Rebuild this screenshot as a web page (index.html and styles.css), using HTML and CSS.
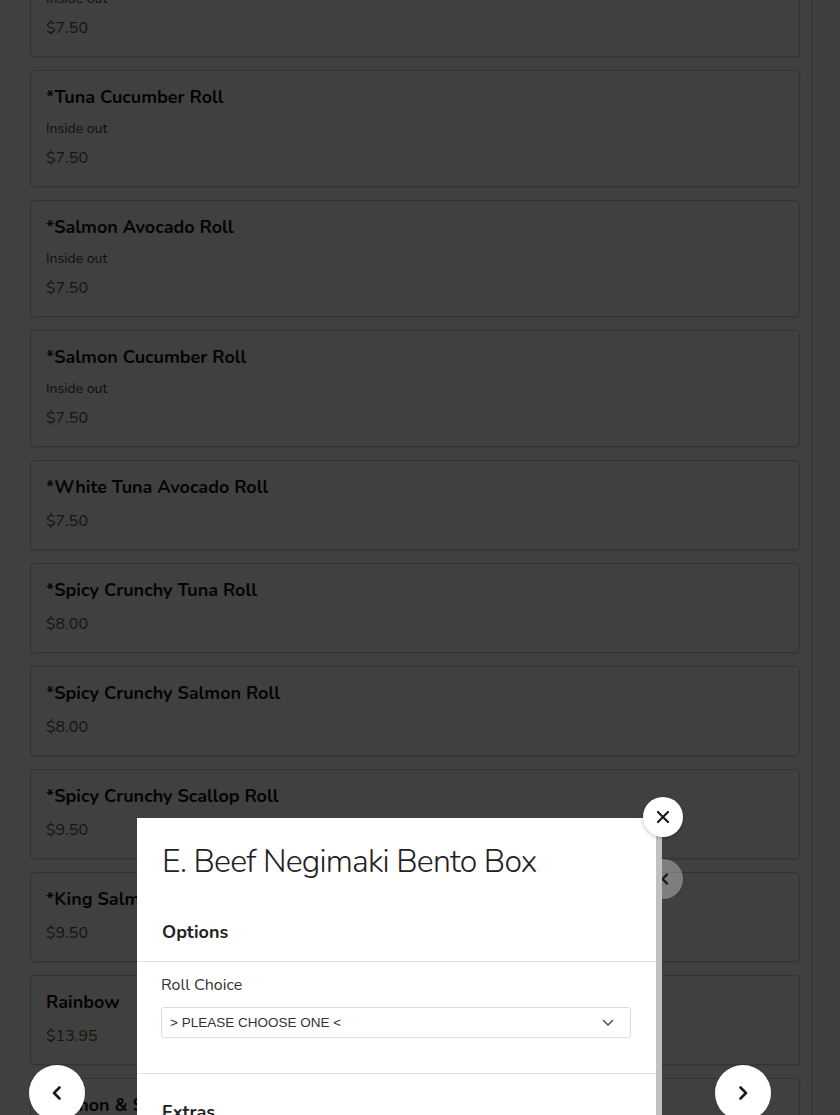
FILE: index.html
```html
<!doctype html>
<html lang="en">
    <head>
        <meta charset="UTF-8" />
        <meta name="viewport" content="width=device-width, initial-scale=1.0" />
        <title>Sushi Rolls</title>
        <link rel="stylesheet" href="styles.css">
    </head>
    <body>
        <div class="page">
            <div class="menu">
                <div class="item">
                    <div class="item-name">*Tuna Avocado Roll</div>
                    <div class="item-desc">Inside out</div>
                    <div class="item-price">$7.50</div>
                </div>
                <div class="item">
                    <div class="item-name">*Tuna Cucumber Roll</div>
                    <div class="item-desc">Inside out</div>
                    <div class="item-price">$7.50</div>
                </div>
                <div class="item">
                    <div class="item-name">*Salmon Avocado Roll</div>
                    <div class="item-desc">Inside out</div>
                    <div class="item-price">$7.50</div>
                </div>
                <div class="item">
                    <div class="item-name">*Salmon Cucumber Roll</div>
                    <div class="item-desc">Inside out</div>
                    <div class="item-price">$7.50</div>
                </div>
                <div class="item">
                    <div class="item-name">*White Tuna Avocado Roll</div>
                    <div class="item-price">$7.50</div>
                </div>
                <div class="item">
                    <div class="item-name">*Spicy Crunchy Tuna Roll</div>
                    <div class="item-price">$8.00</div>
                </div>
                <div class="item">
                    <div class="item-name">*Spicy Crunchy Salmon Roll</div>
                    <div class="item-price">$8.00</div>
                </div>
                <div class="item">
                    <div class="item-name">*Spicy Crunchy Scallop Roll</div>
                    <div class="item-price">$9.50</div>
                </div>
                <div class="item">
                    <div class="item-name">*King Salmon Avocado Roll</div>
                    <div class="item-price">$9.50</div>
                </div>
                <div class="item">
                    <div class="item-name">Rainbow</div>
                    <div class="item-price">$13.95</div>
                </div>
                <div class="item">
                    <div class="item-name">Salmon &amp; Scallion Roll</div>
                    <div class="item-price">$8.50</div>
                </div>
            </div>
            <div class="rail"></div>
        </div>

        <div class="overlay"></div>

        <button class="ghost-btn" aria-label="Previous">
            <svg width="14" height="14" viewBox="0 0 14 14"><path d="M9 2.5 4.5 7 9 11.5" fill="none" stroke="#1a1a1a" stroke-width="2.4" stroke-linecap="round" stroke-linejoin="round"/></svg>
        </button>

        <div class="modal">
            <div class="modal-body">
                <h1 class="modal-title">E. Beef Negimaki Bento Box</h1>
                <h2 class="section-title">Options</h2>
                <div class="group">
                    <label class="group-label">Roll Choice</label>
                    <div class="select">
                        <span>&gt; PLEASE CHOOSE ONE &lt;</span>
                        <svg width="12" height="8" viewBox="0 0 12 8"><path d="M1.5 1.5 6 6 10.5 1.5" fill="none" stroke="#444" stroke-width="1.4" stroke-linecap="round" stroke-linejoin="round"/></svg>
                    </div>
                </div>
                <h2 class="section-title extras">Extras</h2>
            </div>
            <div class="modal-scroll"></div>
        </div>

        <button class="close-btn" aria-label="Close">
            <svg width="14" height="14" viewBox="0 0 14 14"><path d="M2 2 12 12M12 2 2 12" stroke="#1a1a1a" stroke-width="2.2" stroke-linecap="round"/></svg>
        </button>

        <button class="nav-btn nav-prev" aria-label="Previous item">
            <svg width="16" height="16" viewBox="0 0 16 16"><path d="M10.5 2.5 5 8l5.5 5.5" fill="none" stroke="#1a1a1a" stroke-width="2.6" stroke-linecap="round" stroke-linejoin="round"/></svg>
        </button>
        <button class="nav-btn nav-next" aria-label="Next item">
            <svg width="16" height="16" viewBox="0 0 16 16"><path d="M5.5 2.5 11 8l-5.5 5.5" fill="none" stroke="#1a1a1a" stroke-width="2.6" stroke-linecap="round" stroke-linejoin="round"/></svg>
        </button>
    </body>
</html>
```

FILE: styles.css
```css
:root {
    --text: #111;
    --muted: #3c3c3c;
    --price: #5e5535;
    --line: #e4e4e4;
    --radius: 4px;
}
body {
    margin: 0;
    background: #fff;
    font-family: "Nunito", "Lato", "Open Sans", sans-serif;
    color: var(--text);
    height: 1115px;
    overflow: hidden;
}
.page {
    display: flex;
    min-height: 100vh;
}
.menu {
    width: 770px;
    padding: 0 11px 0 30px;
    margin-top: -60px;
    display: flex;
    flex-direction: column;
    gap: 13px;
}
.item {
    border: 1px solid #c8c8c8;
    border-radius: var(--radius);
    box-shadow: 0 1px 2px rgba(0, 0, 0, 0.12);
    padding: 15px 15px 17px;
}
.item-name {
    font-size: 18px;
    font-weight: 700;
    line-height: 22px;
    margin-bottom: 12px;
}
.item-desc {
    font-size: 14px;
    line-height: 18px;
    color: var(--muted);
    margin-bottom: 9px;
}
.item-price {
    font-size: 16px;
    line-height: 22px;
    color: var(--price);
}
.rail {
    flex: 1;
    border-left: 1px solid #c4c4c4;
    background: #f6f6f6;
}
.overlay {
    position: fixed;
    inset: 0;
    background: rgba(0, 0, 0, 0.75);
}
button {
    border: none;
    padding: 0;
    cursor: pointer;
    display: flex;
    align-items: center;
    justify-content: center;
    border-radius: 50%;
}
.ghost-btn {
    position: fixed;
    left: 643px;
    top: 859px;
    width: 40px;
    height: 40px;
    background: rgba(255, 255, 255, 0.32);
    padding-left: 4px;
}
.modal {
    position: fixed;
    left: 137px;
    top: 818px;
    width: 525px;
    bottom: -200px;
    display: flex;
    background: #fff;
}
.modal-body {
    flex: 1;
}
.modal-scroll {
    width: 6px;
    background: #c1c1c1;
}
.modal-title {
    margin: 0;
    padding: 22px 25px 0;
    font-size: 32px;
    font-weight: 300;
    line-height: 44px;
    letter-spacing: -0.8px;
    color: #222;
}
.section-title {
    margin: 36px 0 0;
    padding: 0 25px 17px;
    font-size: 18px;
    font-weight: 700;
    line-height: 24px;
    color: #222;
}
.section-title.extras {
    margin-top: 0;
    padding-top: 26px;
}
.group {
    border-top: 1px solid var(--line);
    border-bottom: 1px solid var(--line);
    padding: 13px 25px 35px 24px;
}
.group-label {
    display: block;
    font-size: 16px;
    line-height: 20px;
    color: #333;
}
.select {
    margin-top: 12px;
    height: 29px;
    border: 1px solid #dcdcdc;
    border-radius: 3px;
    display: flex;
    align-items: center;
    justify-content: space-between;
    padding: 0 16px 0 8px;
    font-family: "Liberation Sans", Arial, sans-serif;
    font-size: 13.5px;
    color: #333;
}
.close-btn {
    position: fixed;
    left: 643px;
    top: 797px;
    width: 40px;
    height: 40px;
    background: #fff;
    box-shadow: 0 1px 4px rgba(0, 0, 0, 0.25);
}
.nav-btn {
    position: fixed;
    top: 1065px;
    width: 56px;
    height: 56px;
    background: #fff;
}
.nav-prev {
    left: 29px;
}
.nav-next {
    left: 715px;
}
```
